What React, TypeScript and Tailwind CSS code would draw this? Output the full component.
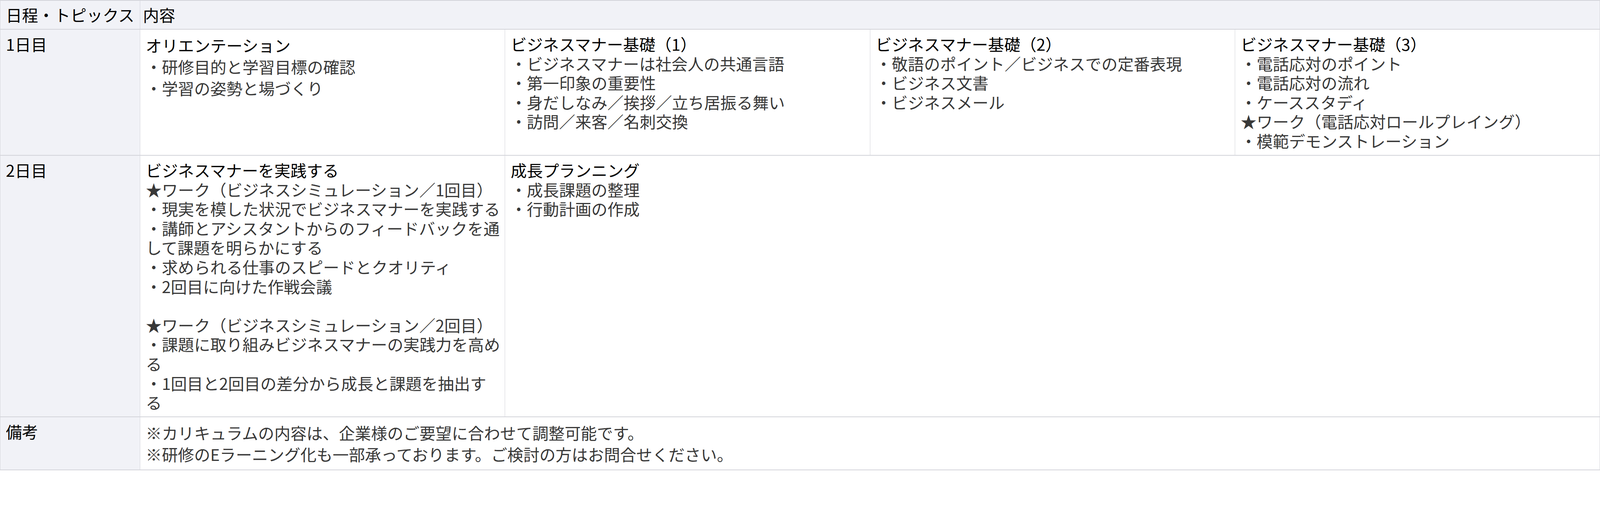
import React from "react"

type Block = {
  title?: string
  lines: string[]
}

const day1: Block[] = [
  {
    title: "オリエンテーション",
    lines: ["・研修目的と学習目標の確認", "・学習の姿勢と場づくり"],
  },
  {
    title: "ビジネスマナー基礎（1）",
    lines: [
      "・ビジネスマナーは社会人の共通言語",
      "・第一印象の重要性",
      "・身だしなみ／挨拶／立ち居振る舞い",
      "・訪問／来客／名刺交換",
    ],
  },
  {
    title: "ビジネスマナー基礎（2）",
    lines: ["・敬語のポイント／ビジネスでの定番表現", "・ビジネス文書", "・ビジネスメール"],
  },
  {
    title: "ビジネスマナー基礎（3）",
    lines: [
      "・電話応対のポイント",
      "・電話応対の流れ",
      "・ケーススタディ",
      "★ワーク（電話応対ロールプレイング）",
      "・模範デモンストレーション",
    ],
  },
]

const practice: Block = {
  title: "ビジネスマナーを実践する",
  lines: [
    "★ワーク（ビジネスシミュレーション／1回目）",
    "・現実を模した状況でビジネスマナーを実践する",
    "・講師とアシスタントからのフィードバックを通",
    "して課題を明らかにする",
    "・求められる仕事のスピードとクオリティ",
    "・2回目に向けた作戦会議",
    "",
    "★ワーク（ビジネスシミュレーション／2回目）",
    "・課題に取り組みビジネスマナーの実践力を高め",
    "る",
    "・1回目と2回目の差分から成長と課題を抽出す",
    "る",
  ],
}

const planning: Block = {
  title: "成長プランニング",
  lines: ["・成長課題の整理", "・行動計画の作成"],
}

const notes = [
  "※カリキュラムの内容は、企業様のご要望に合わせて調整可能です。",
  "※研修のEラーニング化も一部承っております。ご検討の方はお問合せください。",
]

// a couple of cells use a looser line height
const CellText = ({ block, loose }: { block: Block; loose?: boolean }) => {
  const lh = loose ? "leading-[54.9px]" : "leading-[49.6px]"
  return (
    <div className={`flex flex-col text-[41.3px] ${lh}`}>
      {block.title && <div className="whitespace-nowrap text-black">{block.title}</div>}
      {block.lines.map((line, i) =>
        line ? (
          <div key={i} className="whitespace-nowrap text-[#383838]">
            {line}
          </div>
        ) : (
          <div key={i} className="h-[49.6px]" />
        )
      )}
    </div>
  )
}

const labelCell =
  "border-x border-y-2 border-[#d3d4da] bg-[#f1f2f7] px-[14px] py-[11.7px] text-left align-top text-[41.3px] leading-[49.6px] font-normal text-black"
const bodyCell = "border-x border-y-2 border-[#d3d4da] bg-white px-[14px] py-[11.7px] text-left align-top"

export default function App() {
  return (
    <div className="w-full bg-white font-['Noto_Sans_CJK_JP','Noto_Sans',sans-serif]">
      <table className="w-full table-fixed border-collapse">
        <colgroup>
          <col className="w-[358px]" />
          <col />
          <col />
          <col />
          <col />
        </colgroup>
        <thead>
          <tr>
            <th className="border-x border-y-2 border-[#d3d4da] bg-[#f1f2f7] py-[11.4px] pl-[14px] pr-[7px] text-left align-top text-[41.3px] leading-[49.6px] font-normal text-black">
              日程・トピックス
            </th>
            <th
              colSpan={4}
              className="border-x border-y-2 border-[#d3d4da] bg-[#f1f2f7] px-[7px] py-[11.4px] text-left align-top text-[41.3px] leading-[49.6px] font-normal text-black"
            >
              内容
            </th>
          </tr>
        </thead>
        <tbody>
          <tr>
            <td className={labelCell}>1日目</td>
            {day1.map((block, i) => (
              <td key={i} className={bodyCell}>
                <CellText block={block} loose={i === 0} />
              </td>
            ))}
          </tr>
          <tr>
            <td className={labelCell}>2日目</td>
            <td className={bodyCell}>
              <CellText block={practice} />
            </td>
            <td colSpan={3} className={bodyCell}>
              <CellText block={planning} />
            </td>
          </tr>
          <tr>
            <td className={`${labelCell} py-[10.2px]`}>備考</td>
            <td colSpan={4} className={`${bodyCell} py-[10.2px]`}>
              <CellText block={{ lines: notes }} loose />
            </td>
          </tr>
        </tbody>
      </table>
    </div>
  )
}
